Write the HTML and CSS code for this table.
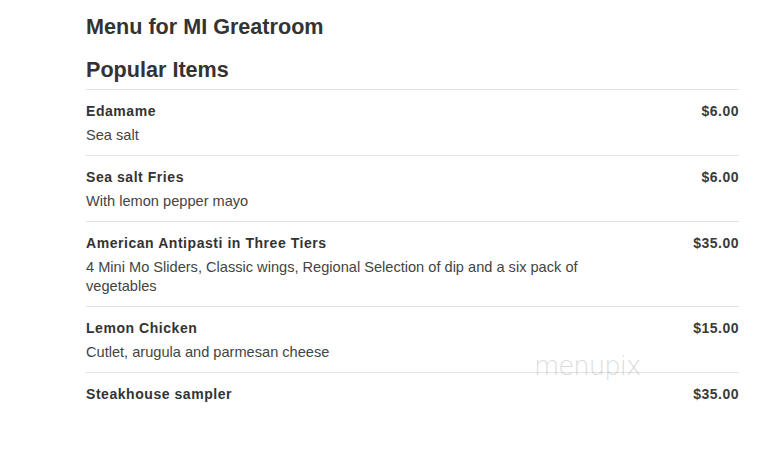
FILE: index.html
```html
<!DOCTYPE html>
<html>
<head>
<meta charset="utf-8">
<link rel="stylesheet" href="styles.css">
</head>
<body>
<main class="menu">
  <h1 class="title">Menu for MI Greatroom</h1>
  <h2 class="section">Popular Items</h2>
  <ul class="items">
    <li class="item">
      <div class="item-head"><span class="name">Edamame</span><span class="price">$6.00</span></div>
      <p class="desc">Sea salt</p>
    </li>
    <li class="item">
      <div class="item-head"><span class="name">Sea salt Fries</span><span class="price">$6.00</span></div>
      <p class="desc">With lemon pepper mayo</p>
    </li>
    <li class="item">
      <div class="item-head"><span class="name">American Antipasti in Three Tiers</span><span class="price">$35.00</span></div>
      <p class="desc desc-long">4 Mini Mo Sliders, Classic wings, Regional Selection of dip and a six pack of vegetables</p>
    </li>
    <li class="item">
      <div class="item-head"><span class="name">Lemon Chicken</span><span class="price">$15.00</span></div>
      <p class="desc">Cutlet, arugula and parmesan cheese</p>
    </li>
    <li class="item">
      <div class="item-head"><span class="name">Steakhouse sampler</span><span class="price">$35.00</span></div>
    </li>
  </ul>
  <div class="watermark">menupix</div>
</main>
</body>
</html>
```
FILE: styles.css
```css
html, body {
  margin: 0;
  padding: 0;
  background: #fff;
}
body {
  font-family: "Liberation Sans", Arial, sans-serif;
  color: #333;
}
.menu {
  position: relative;
  width: 653px;
  margin-left: 86px;
  padding-top: 13px;
}
.title {
  margin: 0;
  font-size: 21.6px;
  line-height: 28px;
  font-weight: bold;
  color: #333;
}
.section {
  margin: 15px 0 0;
  font-size: 21.6px;
  line-height: 28px;
  font-weight: bold;
  color: #333;
}
.items {
  list-style: none;
  margin: 5px 0 0;
  padding: 0;
}
.item {
  border-top: 1px solid #e2e2e2;
  padding: 12px 0 11px;
}
.item-head {
  display: flex;
  justify-content: space-between;
  align-items: baseline;
  line-height: 18px;
  font-size: 14px;
  font-weight: bold;
  color: #333;
}
.name {
  letter-spacing: 0.55px;
}
.price {
  color: #3a3a3a;
  letter-spacing: 0.5px;
}
.desc {
  margin: 6px 0 0;
  font-size: 14.6px;
  line-height: 18px;
  color: #444;
  max-width: 500px;
}
.desc-long {
  line-height: 18.5px;
}
.watermark {
  position: absolute;
  left: 448px;
  top: 351px;
  font-family: "DejaVu Sans", sans-serif;
  font-weight: 200;
  font-size: 26px;
  letter-spacing: -1px;
  color: rgba(150, 150, 150, 0.35);
  pointer-events: none;
}
```
